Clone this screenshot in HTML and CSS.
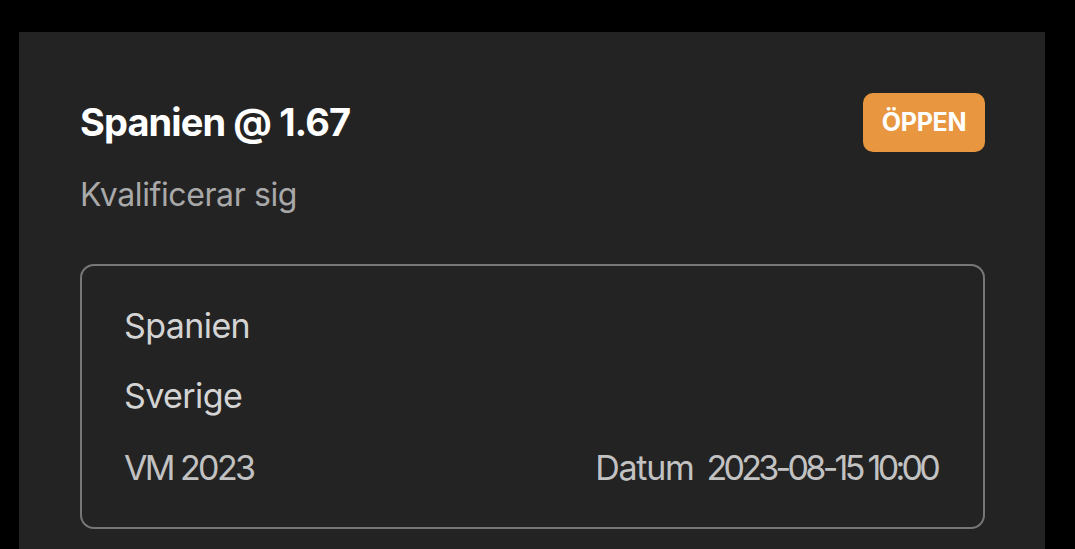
FILE: index.html
```html
<!DOCTYPE html>
<html lang="sv">
<head>
<meta charset="utf-8">
<link rel="stylesheet" href="styles.css">
</head>
<body>
<div class="card">
  <div class="head">
    <h1 class="title">Spanien @ 1.67</h1>
    <span class="badge">ÖPPEN</span>
  </div>
  <p class="subtitle">Kvalificerar sig</p>
  <div class="box">
    <div class="row">Spanien</div>
    <div class="row">Sverige</div>
    <div class="row meta">
      <span class="league">VM 2023</span>
      <span class="date"><span class="label">Datum</span><span class="when">2023-08-15 10:00</span></span>
    </div>
  </div>
</div>
</body>
</html>
```
FILE: styles.css
```css
html, body {
  margin: 0;
  padding: 0;
  background: #000;
  height: 100%;
  overflow: hidden;
}
body {
  font-family: Inter, "Noto Sans", sans-serif;
}
.card {
  margin: 32px 0 0 19px;
  width: 1026px;
  height: 600px;
  box-sizing: border-box;
  background: #232323;
  padding: 60px 60px 0 61px;
}
.head {
  display: flex;
  justify-content: space-between;
  align-items: center;
}
.title {
  margin: 0;
  font-size: 38px;
  font-weight: 700;
  color: #fff;
  letter-spacing: -0.9px;
  line-height: 60px;
}
.badge {
  width: 122px;
  height: 59px;
  box-sizing: border-box;
  display: flex;
  align-items: center;
  justify-content: center;
  background: #e8963f;
  border-radius: 10px;
  color: #fff;
  font-weight: 700;
  font-size: 25px;
  letter-spacing: -0.3px;
}
.subtitle {
  margin: 23px 0 0;
  font-size: 32px;
  color: #a9a9a9;
  letter-spacing: -0.4px;
  line-height: 40px;
}
.box {
  margin-top: 49px;
  border: 2px solid #77777a;
  border-radius: 14px;
  height: 265px;
  box-sizing: border-box;
  padding: 40px 46px 0 42px;
  display: flex;
  flex-direction: column;
  gap: 30px;
}
.row {
  font-size: 34px;
  line-height: 40px;
  color: #d4d4d4;
  letter-spacing: -0.6px;
}
.row + .row + .row {
  margin-top: 2px;
}
.meta {
  display: flex;
  justify-content: space-between;
  color: #c2c2c2;
  font-variant-numeric: proportional-nums;
}
.league {
  letter-spacing: -2.6px;
}
.label {
  letter-spacing: -1.3px;
}
.date {
  display: flex;
  gap: 13px;
}
.when {
  letter-spacing: -3.7px;
}
```
